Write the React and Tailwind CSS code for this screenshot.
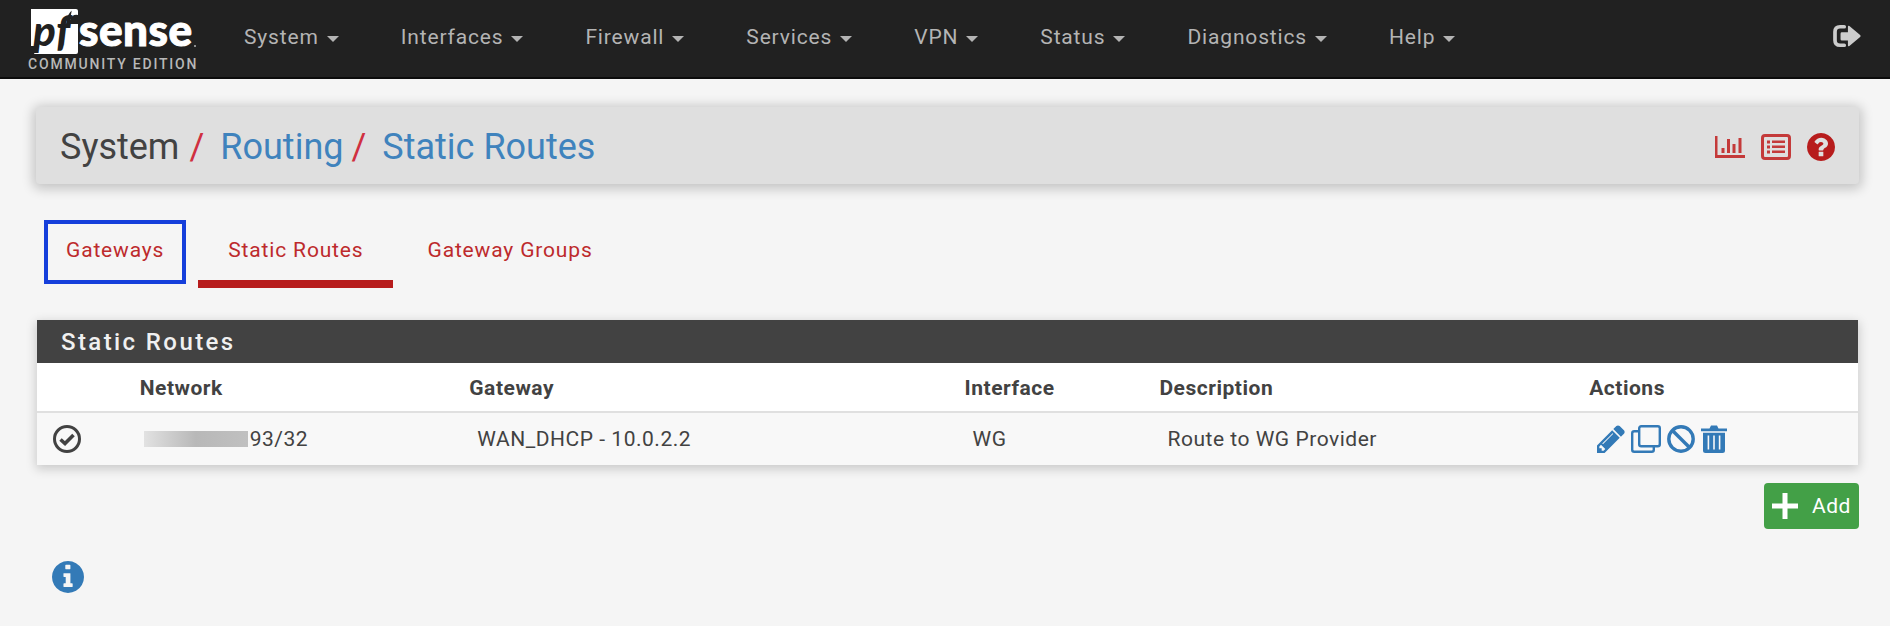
import React from "react";

const icons = {
  signOut: {
    box: "0 0 32 26",
    art: (
      <>
        <path d="M13 3H8.500Q3 3 3 8.500v9Q3 23 8.500 23H13" fill="none" stroke="currentColor" strokeWidth="4" strokeLinecap="round" />
        <path d="M10.500 9H17V3q0-1.800 1.600-.9l11.600 9.700q1.300 1.200 0 2.400L18.600 23.900Q17 24.800 17 23v-5h-6.500Q9 18 9 16.500v-6Q9 9 10.500 9z" />
      </>
    ),
  },
  chart: {
    box: "0 0 30 22",
    art: (
      <path d="M0 0h2.500v19H30v3H0zM6.500 12h3v5h-3zM12 3h3v14h-3zM17.500 8h3v9h-3zM23.500 2h3v15h-3z" />
    ),
  },
  list: {
    box: "0 0 30 26",
    art: (
      <>
        <rect x="1.500" y="1.500" width="27" height="23" rx="2.500" fill="none" stroke="currentColor" strokeWidth="3" />
        <path d="M6 6.500h3v3H6zM6 11.500h3v3H6zM6 16.500h3v3H6zM11 6.500h13v2.600H11zM11 11.500h13v2.600H11zM11 16.500h13v2.600H11z" />
      </>
    ),
  },
  question: { box: "128 128 1536 1536", art: <path d="M1024 1376v-192q0-14-9-23t-23-9h-192q-14 0-23 9t-9 23v192q0 14 9 23t23 9h192q14 0 23-9t9-23zm256-672q0-88-55.500-163t-138.500-116-170-41q-243 0-371 213-15 24 8 42l132 100q7 6 19 6 16 0 25-12 53-68 86-92 34-24 86-24 48 0 85.500 26t37.500 59q0 38-20 61t-68 45q-63 28-115.500 86.500t-52.500 125.500v36q0 14 9 23t23 9h192q14 0 23-9t9-23q0-19 21.500-49.500t54.500-49.500q32-18 49-28.500t46-35 44.500-48 28-60.500 12.500-81zm384 192q0 209-103 385.500t-279.500 279.500-385.500 103-385.500-103-279.500-279.500-103-385.500 103-385.500 279.500-279.500 385.500-103 385.500 103 279.500 279.500 103 385.500z" /> },
  check: {
    box: "0 0 28 28",
    art: (
      <g fill="none" stroke="currentColor">
        <circle cx="14" cy="14" r="12.500" strokeWidth="3" />
        <path d="M7.500 14.500l4.500 4 8.500-8.500" strokeWidth="3.600" />
      </g>
    ),
  },
  pencil: { box: "128 128 1536 1536", art: <path d="M491 1536l91-91-235-235-91 91v107h128v128h107zm523-928q0-22-22-22-10 0-17 7l-542 542q-7 7-7 17 0 22 22 22 10 0 17-7l542-542q7-7 7-17zm-54-192l416 416-832 832h-416v-416zm683 96q0 53-37 90l-166 166-416-416 166-165q36-38 90-38 53 0 91 38l235 234q37 39 37 91z" /> },
  clone: {
    box: "0 0 30 28",
    art: (
      <g fill="none" stroke="currentColor" strokeWidth="2.400">
        <rect x="8.200" y="1.200" width="20.600" height="20" rx="2" />
        <path d="M8 6.200H3.200Q1.200 6.200 1.200 8.200v16.600q0 2 2 2h17.600q2 0 2-2V21" />
      </g>
    ),
  },
  ban: {
    box: "0 0 28 28",
    art: (
      <g fill="none" stroke="currentColor" strokeWidth="3.400">
        <circle cx="14" cy="14" r="12.200" />
        <path d="M5.200 5.200l17.600 17.600" />
      </g>
    ),
  },
  trash: {
    box: "0 0 26 28",
    art: (
      <>
        <path d="M0 3.500h8.500L10 .6h6l1.500 2.900H26v2.700H0z" />
        <path fillRule="evenodd" d="M2 7.800h22v17.700q0 2.500-2.500 2.500h-17Q2 28 2 25.500zM6.600 10.500v14h1.600v-14zm5.600 0v14h1.600v-14zm5.600 0v14h1.600v-14z" />
      </>
    ),
  },
  plus: { box: "0 0 26 26", art: <path d="M10.500 0h5v10.500H26v5H15.500V26h-5V15.500H0v-5h10.500z" /> },
  info: { box: "128 128 1536 1536", art: <path d="M1120 1346v-120q0-14-9-23t-23-9h-76v-452q0-14-9-23t-23-9h-270q-14 0-23 9t-9 23v120q0 14 9 23t23 9h76v300h-76q-14 0-23 9t-9 23v120q0 14 9 23t23 9h378q14 0 23-9t9-23zm-108-856v-150q0-14-9-23t-23-9h-182q-14 0-23 9t-9 23v150q0 14 9 23t23 9h182q14 0 23-9t9-23zm652 406q0 209-103 385.500t-279.500 279.500-385.500 103-385.500-103-279.500-279.500-103-385.500 103-385.500 279.500-279.500 385.500-103 385.500 103 279.500 279.500 103 385.500z" /> },
};

function Icon({ name, className }) {
  const { box, art } = icons[name];
  return (
    <svg viewBox={box} fill="currentColor" aria-hidden="true" className={className}>
      {art}
    </svg>
  );
}

function Logo() {
  return (
    <svg viewBox="0 -8 172 72" className="h-[72px] w-[172px]" role="img" aria-label="pfSense Community Edition">
      <path d="M3 1h45q-7 1-9 10l-1 5h12v28q0 2-2 2H6l4-8H3z" fill="#fff" />
      <path d="M44 1h4q2 0 2 2v4q-6-1-8 5z" fill="#fff" />
      <text x="5" y="38" fontFamily="Lato, sans-serif" fontSize="42" fontWeight="900" fontStyle="italic" fill="#212121">pf</text>
      <text x="51" y="38" fontFamily="Lato, sans-serif" fontSize="44" fontWeight="900" fill="#fff" stroke="#fff" strokeWidth="1">sense</text>
      <circle cx="167" cy="38" r="1" fill="#b0b0b0" />
      <text x="0" y="61" fontFamily="Roboto, sans-serif" fontSize="14" fontWeight="500" letterSpacing="1.800" fill="#b8b8b8">COMMUNITY EDITION</text>
    </svg>
  );
}

const menus = ["System", "Interfaces", "Firewall", "Services", "VPN", "Status", "Diagnostics", "Help"];

const tabs = [
  { label: "Gateways", highlighted: true },
  { label: "Static Routes", active: true },
  { label: "Gateway Groups" },
];

const actions = [
  { name: "pencil", label: "Edit route", size: "h-7 w-7" },
  { name: "clone", label: "Copy route", size: "h-7 w-[30px]" },
  { name: "ban", label: "Disable route", size: "h-7 w-7" },
  { name: "trash", label: "Delete route", size: "h-7 w-[26px]" },
];

export default function App() {
  return (
    <div className="min-h-screen bg-[#f5f5f5] pb-8 font-[Roboto,sans-serif] text-[21px] leading-7 tracking-wide text-[#424242]">
      <header className="flex h-[79px] items-start border-b-2 border-[#0c0c0c] bg-[#212121] px-7 text-[#b4b4b4]">
        <a href="#">
          <Logo />
        </a>
        <nav className="ml-[13px] flex">
          {menus.map((m) => (
            <button key={m} type="button" className="flex h-[74px] items-center gap-2 px-[31px] tracking-[0.04em]">
              {m}
              <svg viewBox="0 0 12 6" className="mt-1 h-[6px] w-3" fill="currentColor" aria-hidden="true">
                <path d="M0 0h12L6 6z" />
              </svg>
            </button>
          ))}
        </nav>
        <a href="#" aria-label="Log out" className="mt-6 ml-auto text-[#cccccc]">
          <Icon name="signOut" className="h-6 w-[30px]" />
        </a>
      </header>

      <main className="mr-[31px] ml-9 mt-7">
        <div className="flex h-[77px] items-center justify-between rounded-sm bg-[#dfdfdf] px-6 pt-0.5 shadow-[0_2px_12px_3px_rgba(0,0,0,0.2)]">
          <h1 className="flex text-4xl tracking-normal">
            System
            <span className="mr-4 ml-2.5 text-[#d03040]">/</span>
            <a href="#" className="text-[#3f83bd]">Routing</a>
            <span className="mr-4 ml-2 text-[#d03040]">/</span>
            <a href="#" className="text-[#3f83bd]">Static Routes</a>
          </h1>
          <div className="flex items-center gap-4 text-[#b71c1c]">
            <a href="#" aria-label="Graph" className="text-[#c43a3a]"><Icon name="chart" className="h-[22px] w-[30px]" /></a>
            <a href="#" aria-label="Logs" className="text-[#c43a3a]"><Icon name="list" className="h-[26px] w-[30px]" /></a>
            <a href="#" aria-label="Help"><Icon name="question" className="h-7 w-7" /></a>
          </div>
        </div>

        <nav className="mt-7 flex gap-1">
          {tabs.map((t) => (
            <a
              key={t.label}
              href="#"
              className={
                "relative flex h-[76px] items-center border-b-8 px-[30px] pt-2 tracking-[0.04em] text-[#bd2a2c] " +
                (t.active ? "border-[#b71c1c]" : "border-transparent")
              }
            >
              {t.label}
              {t.highlighted && <span className="absolute inset-x-2 top-2 -bottom-1 border-4 border-[#153fdb]" />}
            </a>
          ))}
        </nav>

        <section className="mt-8 mr-px ml-px bg-white shadow-[0_3px_10px_1px_rgba(0,0,0,0.18)]">
          <h2 className="flex h-[43px] items-center bg-[#424242] px-6 text-2xl font-medium tracking-widest text-[#f0f0f0]">
            Static Routes
          </h2>
          <table className="w-full table-fixed text-left">
            <colgroup>
              <col className="w-[5.2%]" />
              <col className="w-[18.1%]" />
              <col className="w-[27.2%]" />
              <col className="w-[10.7%]" />
              <col className="w-[23.6%]" />
              <col />
            </colgroup>
            <thead>
              <tr className="h-[49px] border-b-2 border-[#e0e0e0]">
                <th />
                <th className="px-2 pt-0.5 font-bold">Network</th>
                <th className="px-2 pt-0.5 font-bold">Gateway</th>
                <th className="px-2 pt-0.5 font-bold">Interface</th>
                <th className="px-2 pt-0.5 font-bold">Description</th>
                <th className="px-2 pt-0.5 font-bold">Actions</th>
              </tr>
            </thead>
            <tbody>
              <tr className="h-[53px] bg-[#f8f8f8]">
                <td className="px-4"><Icon name="check" className="h-7 w-7" /></td>
                <td className="px-3">
                  <div className="flex items-center gap-0.5">
                    <span className="h-4 w-[104px] bg-linear-to-r from-[#e2e2e2] via-[#b8b8b8] to-[#c0c0c0]" />
                    93/32
                  </div>
                </td>
                <td className="px-4">WAN_DHCP - 10.0.2.2</td>
                <td className="px-4">WG</td>
                <td className="px-4">Route to WG Provider</td>
                <td className="px-4">
                  <div className="flex items-center gap-1.5 text-[#337ab7]">
                    {actions.map((a) => (
                      <a key={a.name} href="#" aria-label={a.label}>
                        <Icon name={a.name} className={a.size} />
                      </a>
                    ))}
                  </div>
                </td>
              </tr>
            </tbody>
          </table>
        </section>

        <div className="mt-[18px] flex justify-end">
          <button type="button" className="flex h-[46px] items-center gap-3.5 rounded-sm bg-[#43a047] px-2 text-white">
            <Icon name="plus" className="h-[26px] w-[26px]" />
            Add
          </button>
        </div>
        <button type="button" aria-label="Show information" className="mt-8 ml-4 block text-[#337ab7]">
          <Icon name="info" className="h-8 w-8" />
        </button>
      </main>
    </div>
  );
}
